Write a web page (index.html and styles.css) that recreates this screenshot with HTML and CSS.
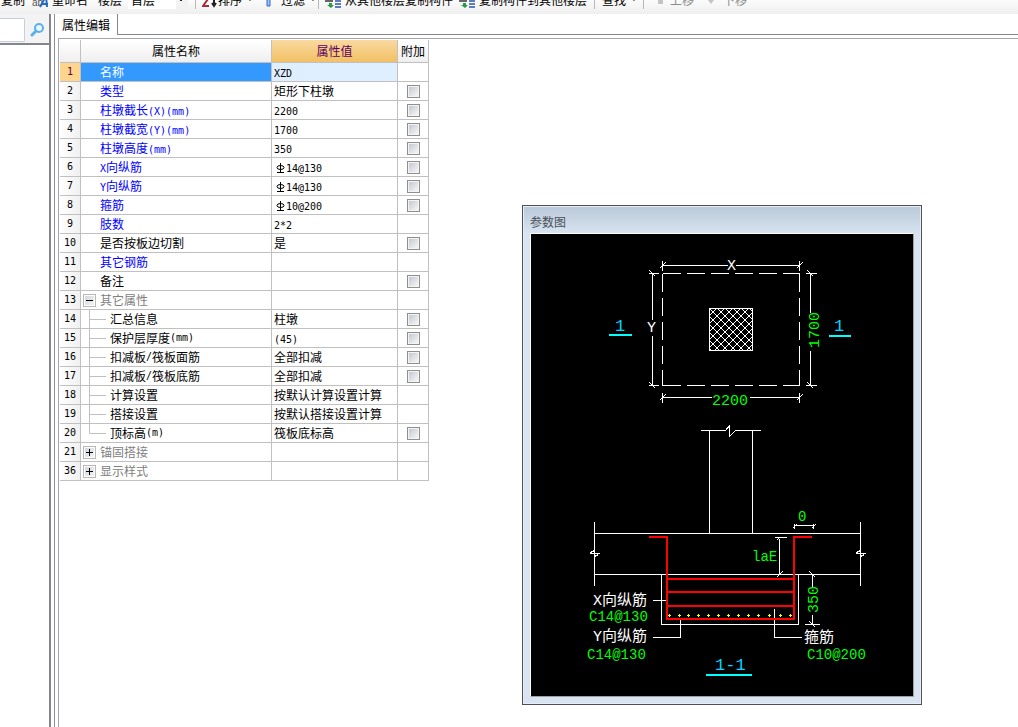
FILE: index.html
```html
<!DOCTYPE html>
<html lang="zh-CN">
<head>
<meta charset="utf-8">
<title>属性编辑</title>
<link rel="stylesheet" href="styles.css">
</head>
<body>
<svg class="defs" aria-hidden="true">
  <symbol id="rebar" viewBox="0 0 12 10"><path d="M6.5 0V9M3 9.5H10" fill="none" stroke="#000"/><ellipse cx="6.5" cy="4.5" rx="3.5" ry="2" fill="none" stroke="#000"/></symbol>
  <symbol id="branch" viewBox="0 0 25 18"><path d="M8.5 0V18M8.5 9.5H25" fill="none" stroke="#c0c0c0"/></symbol>
  <symbol id="branch-end" viewBox="0 0 25 18"><path d="M8.5 0V9.5H25" fill="none" stroke="#c0c0c0"/></symbol>
  <symbol id="copy" viewBox="0 0 16 16"><path d="M0 8H8V10H0Z" fill="#666"/><path d="M4 11H7V13H9L6 16L2 13H4Z" fill="#2b9a40"/><path d="M10 5H16V7H10ZM10 8H16V10H10ZM10 11H16V13H10ZM10 14H16V16H10Z" fill="#5b7fbe"/></symbol>
</svg>

<header class="toolbar">
  <button class="tool copy-tool">复制</button>
  <button class="tool rename-tool"><svg width="18" height="16" viewBox="0 0 18 16"><text x="0" y="14" class="ab">ab</text><path d="M8 15L14 4L15 15M10 12H16" fill="none" stroke="#2868c0" stroke-width="2"/></svg>重命名</button>
  <label class="tool floor-label" for="floor">楼层</label>
  <select id="floor" class="floor"><option>首层</option></select>
  <span class="sep"></span>
  <button class="tool sort-tool"><svg width="16" height="16" viewBox="0 0 16 16"><path d="M1 7H6L1 14H7" fill="none" stroke="#a03038" stroke-width="2"/><path d="M12 4V13M10 11L12 14L14 11" fill="none" stroke="#222" stroke-width="2"/></svg>排序<i class="caret"></i></button>
  <button class="tool filter-tool"><svg width="12" height="16" viewBox="0 0 12 16"><path d="M2 3H5V14H2Z" fill="#9cc2ff" stroke="#3864c0"/></svg>过滤<i class="caret"></i></button>
  <span class="sep"></span>
  <button class="tool from-tool"><svg width="16" height="16"><use href="#copy"/></svg>从其他楼层复制构件</button>
  <button class="tool to-tool"><svg width="16" height="16"><use href="#copy"/></svg>复制构件到其他楼层</button>
  <span class="sep"></span>
  <button class="tool find-tool">查找<i class="caret"></i></button>
  <span class="sep"></span>
  <button class="tool up-tool" disabled><svg width="14" height="16" viewBox="0 0 14 16"><path d="M2 8H7V12H2Z" fill="#c4c4c4"/></svg>上移</button>
  <button class="tool down-tool" disabled><svg width="14" height="16" viewBox="0 0 14 16"><path d="M0 8H6L3 12Z" fill="#c4c4c4"/></svg>下移</button>
</header>

<main class="workspace">
  <aside class="sidebar">
    <form class="search">
      <input type="text" aria-label="搜索">
      <button type="button" aria-label="查找"><svg width="16" height="16" viewBox="0 0 16 16"><circle cx="9" cy="6" r="4" fill="#e8f6ff" stroke="#5ab0ea" stroke-width="2"/><path d="M6 9L2 13" stroke="#5ab0ea" stroke-width="3" stroke-linecap="round"/></svg></button>
    </form>
  </aside>
  <section class="editor">
    <nav class="tabs"><button class="tab">属性编辑</button><span class="tab-rest"></span></nav>
    <div class="sheet">
      <table class="props">
        <colgroup><col class="c-num"><col class="c-name"><col class="c-value"><col class="c-extra"></colgroup>
        <thead><tr><th></th><th>属性名称</th><th class="active">属性值</th><th>附加</th></tr></thead>
        <tbody>
          <tr class="selected"><th>1</th><td class="name">名称</td><td><span class="l">XZD</span></td><td></td></tr>
          <tr><th>2</th><td class="name key">类型</td><td>矩形下柱墩</td><td class="extra"><input type="checkbox" aria-label="附加 类型"></td></tr>
          <tr><th>3</th><td class="name key">柱墩截长<span class="l">(X)(mm)</span></td><td><span class="l">2200</span></td><td class="extra"><input type="checkbox" aria-label="附加 柱墩截长"></td></tr>
          <tr><th>4</th><td class="name key">柱墩截宽<span class="l">(Y)(mm)</span></td><td><span class="l">1700</span></td><td class="extra"><input type="checkbox" aria-label="附加 柱墩截宽"></td></tr>
          <tr><th>5</th><td class="name key">柱墩高度<span class="l">(mm)</span></td><td><span class="l">350</span></td><td class="extra"><input type="checkbox" aria-label="附加 柱墩高度"></td></tr>
          <tr><th>6</th><td class="name key"><span class="l">X</span>向纵筋</td><td><svg class="rebar"><use href="#rebar"/></svg><span class="l">14@130</span></td><td class="extra"><input type="checkbox" aria-label="附加 X向纵筋"></td></tr>
          <tr><th>7</th><td class="name key"><span class="l">Y</span>向纵筋</td><td><svg class="rebar"><use href="#rebar"/></svg><span class="l">14@130</span></td><td class="extra"><input type="checkbox" aria-label="附加 Y向纵筋"></td></tr>
          <tr><th>8</th><td class="name key">箍筋</td><td><svg class="rebar"><use href="#rebar"/></svg><span class="l">10@200</span></td><td class="extra"><input type="checkbox" aria-label="附加 箍筋"></td></tr>
          <tr><th>9</th><td class="name key">肢数</td><td><span class="l">2*2</span></td><td></td></tr>
          <tr><th>10</th><td class="name">是否按板边切割</td><td>是</td><td class="extra"><input type="checkbox" aria-label="附加 是否按板边切割"></td></tr>
          <tr><th>11</th><td class="name key">其它钢筋</td><td></td><td></td></tr>
          <tr><th>12</th><td class="name">备注</td><td></td><td class="extra"><input type="checkbox" aria-label="附加 备注"></td></tr>
          <tr><th>13</th><td class="group"><div class="node"><button class="toggle open" aria-label="收起"></button>其它属性</div></td><td></td><td></td></tr>
          <tr><th>14</th><td class="child"><div class="node"><svg class="branch"><use href="#branch"/></svg>汇总信息</div></td><td>柱墩</td><td class="extra"><input type="checkbox" aria-label="附加 汇总信息"></td></tr>
          <tr><th>15</th><td class="child"><div class="node"><svg class="branch"><use href="#branch"/></svg>保护层厚度<span class="l">(mm)</span></div></td><td><span class="l">(45)</span></td><td class="extra"><input type="checkbox" aria-label="附加 保护层厚度"></td></tr>
          <tr><th>16</th><td class="child"><div class="node"><svg class="branch"><use href="#branch"/></svg>扣减板<span class="l">/</span>筏板面筋</div></td><td>全部扣减</td><td class="extra"><input type="checkbox" aria-label="附加 面筋"></td></tr>
          <tr><th>17</th><td class="child"><div class="node"><svg class="branch"><use href="#branch"/></svg>扣减板<span class="l">/</span>筏板底筋</div></td><td>全部扣减</td><td class="extra"><input type="checkbox" aria-label="附加 底筋"></td></tr>
          <tr><th>18</th><td class="child"><div class="node"><svg class="branch"><use href="#branch"/></svg>计算设置</div></td><td>按默认计算设置计算</td><td></td></tr>
          <tr><th>19</th><td class="child"><div class="node"><svg class="branch"><use href="#branch"/></svg>搭接设置</div></td><td>按默认搭接设置计算</td><td></td></tr>
          <tr><th>20</th><td class="child"><div class="node"><svg class="branch"><use href="#branch-end"/></svg>顶标高<span class="l">(m)</span></div></td><td>筏板底标高</td><td class="extra"><input type="checkbox" aria-label="附加 顶标高"></td></tr>
          <tr><th>21</th><td class="group"><div class="node"><button class="toggle" aria-label="展开"></button>锚固搭接</div></td><td></td><td></td></tr>
          <tr><th>36</th><td class="group"><div class="node"><button class="toggle" aria-label="展开"></button>显示样式</div></td><td></td><td></td></tr>
        </tbody>
      </table>
    </div>
  </section>
</main>

<section class="window">
  <h2>参数图</h2>
  <svg class="drawing" viewBox="531 234 382 462">
    <defs>
      <pattern id="hatch" x="709" y="308" width="8" height="8" patternUnits="userSpaceOnUse"><path d="M-1 -1L9 9M-1 9L9 -1" stroke="#fff" stroke-width="1" fill="none"/></pattern>
    </defs>
    <rect x="709" y="308" width="44" height="43" fill="url(#hatch)"/>
    <g class="white" transform="translate(.5 .5)">
      <rect x="709" y="308" width="43" height="42"/>
      <path stroke-dasharray="18 6" d="M662 273H799M662 385H799M662 273V385M799 273V385"/>
      <path d="M662 265H727M735 265H799M662 260V270M799 260V270M659 268L665 262M796 268L802 262"/>
      <path d="M662 397H711M749 397H799M662 392V402M799 392V402M659 400L665 394M796 400L802 394"/>
      <path d="M652 273V319M652 335V385M648 273H658M648 385H658M649 270L655 276M649 382L655 388"/>
      <path d="M810 273V312M810 350V385M805 273H816M805 385H816M807 270L813 276M807 382L813 388"/>
      <path d="M700 430H725L729 425V436L735 430H760M709 430V533M752 430V533"/>
      <path d="M594 533H860M594 574H860M594 521V585M860 521V585"/>
      <path d="M589 553H599M590 552L594 550V556L598 554M855 553H865M856 552L860 550V556L864 554"/>
      <path d="M661 574V624H798V574"/>
      <path d="M794 525H813M794 523V528M813 523V528M792 528L796 524M811 528L815 524"/>
      <path d="M779 538V574M774 537H786M776 540L779 537M776 577L782 571"/>
      <path d="M812 574V586M812 614V624M804 624H819M809 571L815 577M809 621L815 627"/>
      <path d="M652 600H667M652 637H680V617M774 608V637H801"/>
    </g>
    <path class="red" d="M649 537H667V619H794V537H812M667 579H794M667 592H794M667 606H794"/>
    <path class="dots" d="M668 615.5h3m-1.5 -1.5v3M678 615.5h3m-1.5 -1.5v3M687 615.5h3m-1.5 -1.5v3M697 615.5h3m-1.5 -1.5v3M707 615.5h3m-1.5 -1.5v3M717 615.5h3m-1.5 -1.5v3M727 615.5h3m-1.5 -1.5v3M737 615.5h3m-1.5 -1.5v3M747 615.5h3m-1.5 -1.5v3M757 615.5h3m-1.5 -1.5v3M768 615.5h3m-1.5 -1.5v3M779 615.5h3m-1.5 -1.5v3M789 615.5h3m-1.5 -1.5v3"/>
    <path class="cyan" d="M609 335H632M829 336H851M706 675H752"/>
    <g class="t-mark">
      <text x="615" y="331">1</text><text x="834" y="331">1</text><text x="715" y="670">1-1</text>
    </g>
    <g class="t-label">
      <text x="727" y="270" class="latin">X</text>
      <text x="647" y="332" class="latin">Y</text>
      <text x="593" y="605"><tspan class="latin">X</tspan>向纵筋</text>
      <text x="593" y="641"><tspan class="latin">Y</tspan>向纵筋</text>
      <text x="804" y="642">箍筋</text>
    </g>
    <g class="t-dim">
      <text x="712" y="405">2200</text>
      <text transform="translate(819 348) rotate(-90)">1700</text>
      <text transform="translate(818 613) rotate(-90)">350</text>
    </g>
    <g class="t-code">
      <text x="798" y="521">0</text>
      <text x="752" y="561">laE</text>
      <text x="589" y="621">C14@130</text>
      <text x="587" y="659">C14@130</text>
      <text x="807" y="659">C10@200</text>
    </g>
  </svg>
</section>
</body>
</html>
```
FILE: styles.css
```css
* { box-sizing: border-box; }

body {
  margin: 0;
  min-height: 100vh;
  display: flex;
  flex-direction: column;
  position: relative;
  background: #fff;
  color: #000;
  font: 12px/18px "Noto Sans CJK SC", sans-serif;
}

button, input, select { font: inherit; color: inherit; margin: 0; padding: 0; }
button { border: 0; background: none; }

.defs { position: absolute; width: 0; height: 0; }

/* Toolbar */
.toolbar {
  height: 14px;
  flex: none;
  display: flex;
  align-items: flex-end;
  padding-bottom: 5px;
  overflow: hidden;
  white-space: nowrap;
  background: linear-gradient(#fbfbfb, #efefef);
}
.tool { display: flex; flex: none; align-items: center; height: 18px; line-height: 18px; }
.tool svg { flex: none; }
.tool:disabled { color: #8c8c8c; }
.ab { font: 10px "Liberation Sans", sans-serif; fill: #555; }
.caret { margin: 0 0 0 6px; border: 2px solid transparent; border-top-color: #222; border-bottom: 0; }
.sep { flex: none; width: 1px; height: 20px; margin: 0 6px 0 7px; background: #b8b8b8; }
.copy-tool { width: 32px; padding-left: 1px; }
.rename-tool { gap: 2px; width: 66px; }
.floor-label { width: 30px; }
.floor {
  appearance: none;
  flex: none;
  width: 60px;
  height: 18px;
  padding-left: 3px;
  border: 0;
  border-radius: 0;
  line-height: 18px;
  background:
    linear-gradient(#222, #222) right 6px center / 2px 2px no-repeat,
    linear-gradient(#f2f2f2, #f2f2f2) right / 12px 100% no-repeat,
    #fff;
}
.sort-tool { width: 63px; }
.filter-tool { width: 46px; gap: 4px; }
.filter-tool .caret { margin-left: 2px; }
.from-tool { width: 134px; gap: 4px; }
.to-tool { gap: 4px; }
.find-tool { width: 34px; margin-left: 1px; }
.up-tool { width: 52px; margin-left: 6px; }
.down-tool { gap: 1px; }

/* Side panel */
.workspace { flex: 1; display: flex; }
.sidebar { flex: none; width: 51px; border-right: 2px solid #85858d; }
.search {
  height: 31px;
  display: flex;
  align-items: center;
  gap: 5px;
  padding-top: 3px;
  border-bottom: 2px solid #85858d;
  background: #f3f3f3;
}
.search input { width: 25px; height: 24px; border: 1px solid #c5cede; border-left: 0; border-radius: 0 2px 2px 0; background: #fff; }
.search button { width: 16px; height: 16px; line-height: 0; }

/* Editor */
.editor { flex: 1; display: flex; flex-direction: column; margin-left: 3px; border-left: 1px solid #8e8e96; }
.tabs { display: flex; height: 21px; }
.tab { width: 63px; border-right: 1px solid #85858d; }
.tab-rest { flex: 1; border-bottom: 1px solid #85858d; }
.sheet { flex: 1; margin: 3px 0 0 3px; padding: 1px; border: 1px solid #a5a5ad; border-width: 1px 0 0 1px; }

.props { table-layout: fixed; width: 369px; border-collapse: separate; border-spacing: 0; }
.c-num { width: 21px; }
.c-name { width: 191px; }
.c-value { width: 126px; }
.c-extra { width: 31px; }
.props th, .props td {
  height: 19px;
  padding: 0 0 0 2px;
  border: 0 solid #c0c0c0;
  border-width: 0 1px 1px 0;
  font-weight: normal;
  text-align: left;
  white-space: nowrap;
}
.props th { padding: 0; text-align: center; background: linear-gradient(to right, #fff, #f0f0f0); }
.props tbody th { font: 10px/18px "DejaVu Sans Mono", monospace; }
.props thead th { height: 23px; background: linear-gradient(#fff, #efefef); }
.props thead .active { background: linear-gradient(#f9d9a0, #f2c064); color: #5c0060; }
.props .name { padding-left: 19px; }
.props .key { color: #00f; }
.props .group, .props .child { padding-left: 0; }
.props .group { color: #808080; }
.props .selected th { background: #ffd58d; color: #5c0040; }
.props .selected .name { background: #39f; color: #fff; }
.props .selected .name + td { background: #e0efff; }
.props .extra { padding: 0; text-align: center; line-height: 0; }
.l { font: 10px/10px "DejaVu Sans Mono", monospace; }

.node { display: flex; align-items: center; height: 18px; }
.branch { width: 25px; height: 18px; margin-right: 4px; }
.rebar { width: 12px; height: 10px; vertical-align: -1px; }

.toggle {
  width: 13px;
  height: 13px;
  margin: 0 4px 0 2px;
  border: 1px solid #b8b8b8;
  outline: 1px solid #fff;
  outline-offset: -2px;
  background:
    linear-gradient(#000, #000) center / 7px 1px no-repeat,
    linear-gradient(#000, #000) center / 1px 7px no-repeat,
    linear-gradient(135deg, #cfd4dc, #f6f6f6);
}
.toggle.open {
  background:
    linear-gradient(#000, #000) center / 7px 1px no-repeat,
    linear-gradient(135deg, #cfd4dc, #f6f6f6);
}

input[type="checkbox"] {
  appearance: none;
  width: 13px;
  height: 13px;
  padding: 1px;
  border: 1px solid #8e8f8f;
  background: linear-gradient(135deg, #c4c9d0, #f6f6f6) content-box, #f4f4f4;
}

/* Floating parameter window */
.window {
  position: absolute;
  left: 522px;
  top: 205px;
  padding: 0 7px 7px;
  border: 1px solid #4f4f55;
  box-shadow: inset 0 0 0 1px #e8eef6;
  background: linear-gradient(#b9c8d8, #d8e4f1 28px);
}
.window h2 { margin: 0; padding: 7px 0 2px; font-size: 12px; line-height: 18px; font-weight: normal; color: #4a4f57; }
.drawing {
  display: block;
  width: 384px;
  height: 464px;
  border: 1px solid #fff;
  border-right-color: #a0a0a0;
  border-bottom-color: #a0a0a0;
  background: #000;
}
.drawing path, .white { fill: none; shape-rendering: crispEdges; }
.white { stroke: #fff; }
.red { stroke: #f00; stroke-width: 2; }
.dots { stroke: #ff0; }
.cyan { stroke: #0ff; stroke-width: 2; }
.t-mark { font: 17px "Liberation Mono", monospace; fill: #00d4ff; }
.t-label { font: 15px "Noto Sans CJK SC", sans-serif; fill: #fff; }
.latin { font: 15px "Liberation Mono", monospace; }
.t-dim { font: 15px "Liberation Mono", monospace; fill: #0f0; }
.t-code { font: 14px "Liberation Mono", monospace; fill: #0f0; }
```
